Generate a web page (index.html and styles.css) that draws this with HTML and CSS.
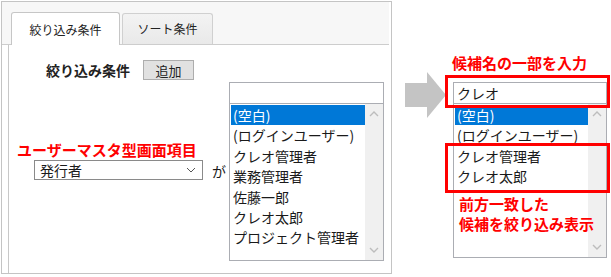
FILE: index.html
```html
<!DOCTYPE html>
<html lang="ja">
<head>
  <meta charset="UTF-8">
  <title>絞り込み条件</title>
  <link rel="stylesheet" href="styles.css">
</head>
<body>
  <div class="page">
    <!-- Filter dialog -->
    <section class="panel">
      <div class="tabs">
        <div class="tab active">絞り込み条件</div>
        <div class="tab">ソート条件</div>
      </div>
      <div class="tab-body">
        <div class="cond-head">
          <span class="cond-label">絞り込み条件</span>
          <button class="btn">追加</button>
        </div>
        <div class="cond-row">
          <div class="select">
            <span>発行者</span>
            <svg class="chev" width="10" height="6" viewBox="0 0 10 6"><path d="M1 1 L5 5 L9 1" fill="none" stroke="#555" stroke-width="1"/></svg>
          </div>
          <span class="ga">が</span>
          <div class="picker">
            <div class="search"></div>
            <div class="listbox">
              <ul class="items">
                <li class="selected">(空白)</li>
                <li>(ログインユーザー)</li>
                <li>クレオ管理者</li>
                <li>業務管理者</li>
                <li>佐藤一郎</li>
                <li>クレオ太郎</li>
                <li>プロジェクト管理者</li>
              </ul>
              <div class="scroll">
                <svg width="10" height="6" viewBox="0 0 10 6"><path d="M1 5 L5 1 L9 5" fill="none" stroke="#bdbdbd" stroke-width="1.4"/></svg>
                <svg width="10" height="6" viewBox="0 0 10 6"><path d="M1 1 L5 5 L9 1" fill="none" stroke="#bdbdbd" stroke-width="1.4"/></svg>
              </div>
            </div>
          </div>
        </div>
      </div>
    </section>

    <!-- After typing -->
    <section class="demo">
      <svg class="arrow" width="42" height="48" viewBox="0 0 42 48">
        <polygon points="0,11 22,11 22,0 41,23 22,46 22,35 0,35" fill="#c4c4c4"/>
      </svg>
      <div class="picker picker-r">
        <div class="search">クレオ</div>
        <div class="listbox listbox-r">
          <ul class="items">
            <li class="selected">(空白)</li>
            <li>(ログインユーザー)</li>
            <li>クレオ管理者</li>
            <li>クレオ太郎</li>
          </ul>
          <div class="scroll">
            <svg width="10" height="6" viewBox="0 0 10 6"><path d="M1 5 L5 1 L9 5" fill="none" stroke="#bdbdbd" stroke-width="1.4"/></svg>
            <svg width="10" height="6" viewBox="0 0 10 6"><path d="M1 1 L5 5 L9 1" fill="none" stroke="#bdbdbd" stroke-width="1.4"/></svg>
          </div>
        </div>
      </div>
    </section>

    <!-- Annotations -->
    <p class="note note-field">ユーザーマスタ型画面項目</p>
    <p class="note note-input">候補名の一部を入力</p>
    <div class="mark mark-input"></div>
    <div class="mark mark-match"></div>
    <p class="note note-result">前方一致した<br>候補を絞り込み表示</p>
  </div>
</body>
</html>
```

FILE: styles.css
```css
/* Filter condition screenshot */
* {
  box-sizing: border-box;
}

body {
  margin: 0;
  background: #fff;
  font-family: "Noto Sans CJK JP", sans-serif;
  color: #1a1a1a;
}

.page {
  position: relative;
  display: flex;
  width: 611px;
  height: 277px;
  padding: 1px 0 0 1px;
}

.panel {
  width: 391px;
  height: 273px;
  border: 1px solid #c4c4c4;
  display: flex;
  flex-direction: column;
}

.tabs {
  display: flex;
  align-items: flex-end;
  height: 43px;
  padding-left: 9px;
  margin-right: 2px;
  background: #f7f7f7;
  border-bottom: 1px solid #cdcdcd;
}

.tab {
  width: 91px;
  height: 31px;
  margin-left: 2px;
  padding-top: 6px;
  text-align: center;
  font-size: 12px;
  line-height: 17px;
  color: #222;
  background: linear-gradient(#f3f3f3, #e9e9e9);
  border: 1px solid #d0d0d0;
  border-bottom: none;
  border-radius: 3px 3px 0 0;
}

.tab.active {
  width: 109px;
  height: 33px;
  margin-left: 0;
  margin-bottom: -1px;
  padding-top: 8px;
  background: #fff;
  border-color: #c6c6c6;
  position: relative;
}

.tab-body {
  flex: 1;
  margin-left: 6px;
  border-left: 1px solid #c8c8c8;
}

.cond-head {
  display: flex;
  align-items: center;
  height: 20px;
  margin-top: 15px;
  padding-left: 37px;
  gap: 13px;
}

.cond-label {
  font-size: 14px;
  font-weight: bold;
  color: #222;
}

.btn {
  width: 51px;
  height: 20px;
  padding: 0;
  font-family: inherit;
  font-size: 13px;
  line-height: 17px;
  color: #222;
  background: #e1e1e1;
  border: 1px solid #adadad;
}

.cond-row {
  display: flex;
  margin-top: 2px;
}

.select {
  display: flex;
  align-items: center;
  justify-content: space-between;
  width: 169px;
  height: 20px;
  margin: 78px 0 0 25px;
  padding: 0 6px 0 5px;
  font-size: 14px;
  border: 1px solid #8a8a8a;
  background: #fff;
}

.ga {
  margin: 80px 3px 0 9px;
  font-size: 14px;
  line-height: 18px;
}

.picker {
  width: 155px;
}

.search {
  height: 22px;
  padding-left: 3px;
  font-size: 14px;
  line-height: 20px;
  border: 1px solid #abadb3;
  background: #fff;
}

.listbox {
  display: flex;
  height: 158px;
  margin-top: -1px;
  border: 1px solid #abadb3;
}

.items {
  flex: 1;
  margin: 0;
  padding: 1px 0 0 1px;
  list-style: none;
  font-size: 14px;
}

.items li {
  height: 20.4px;
  line-height: 20.4px;
  padding-left: 2px;
  white-space: nowrap;
}

.items .selected {
  background: #0078d7;
  color: #fff;
}

.scroll {
  display: flex;
  flex-direction: column;
  justify-content: space-between;
  align-items: center;
  width: 18px;
  padding: 7px 0 7px;
  background: #f0f0f0;
}

.demo {
  display: flex;
  align-items: flex-start;
}

.arrow {
  margin: 71px 0 0 13px;
}

.picker-r {
  width: 154px;
  margin: 81px 0 0 6px;
}

.listbox-r {
  height: 155px;
}

.note {
  position: absolute;
  margin: 0;
  font-size: 15px;
  font-weight: bold;
  color: #f00;
  line-height: 17px;
  white-space: nowrap;
}

.note-field {
  left: 17px;
  top: 141px;
}

.note-input {
  left: 452px;
  top: 54px;
}

.note-result {
  left: 459px;
  top: 194px;
  line-height: 19.5px;
}

.mark {
  position: absolute;
  border: 3px solid #f00;
}

.mark-input {
  left: 445px;
  top: 75px;
  width: 165px;
  height: 33px;
}

.mark-match {
  left: 445px;
  top: 143px;
  width: 165px;
  height: 50px;
}
```
